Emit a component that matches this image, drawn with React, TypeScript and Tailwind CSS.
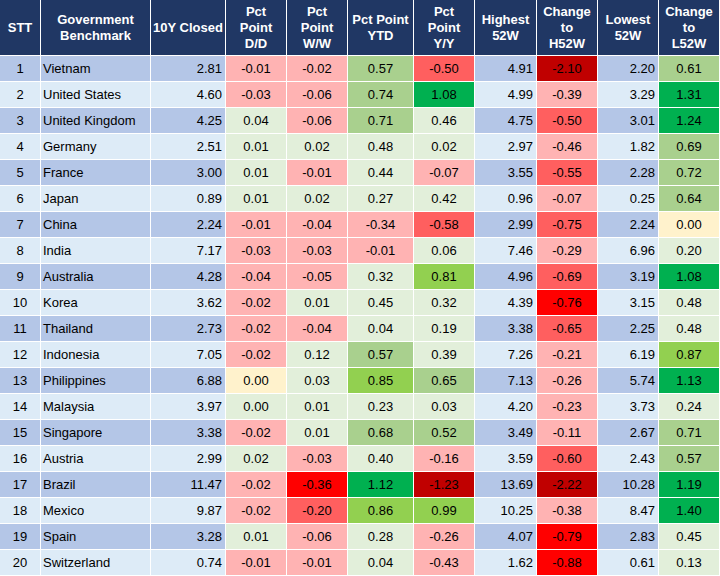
const LR = "bg-[#ffb3b3]";
const LG = "bg-[#e2efda]";
const MG = "bg-[#a9d08e]";
const BG = "bg-[#00b050]";
const LM = "bg-[#92d050]";
const MR = "bg-[#ff5f5f]";
const R = "bg-[#ff0000]";
const DR = "bg-[#c00000]";
const Y = "bg-[#fff2cc]";

type Cell = [string, string];

type Row = {
  name: string;
  closed: string;
  high: string;
  low: string;
  dd: Cell;
  ww: Cell;
  ytd: Cell;
  yy: Cell;
  h52: Cell;
  l52: Cell;
};

const rows: Row[] = [
  { name: "Vietnam", closed: "2.81", dd: ["-0.01", LR], ww: ["-0.02", LR], ytd: ["0.57", MG], yy: ["-0.50", MR], high: "4.91", h52: ["-2.10", DR], low: "2.20", l52: ["0.61", MG] },
  { name: "United States", closed: "4.60", dd: ["-0.03", LR], ww: ["-0.06", LR], ytd: ["0.74", MG], yy: ["1.08", BG], high: "4.99", h52: ["-0.39", LR], low: "3.29", l52: ["1.31", BG] },
  { name: "United Kingdom", closed: "4.25", dd: ["0.04", LG], ww: ["-0.06", LR], ytd: ["0.71", MG], yy: ["0.46", LG], high: "4.75", h52: ["-0.50", MR], low: "3.01", l52: ["1.24", BG] },
  { name: "Germany", closed: "2.51", dd: ["0.01", LG], ww: ["0.02", LG], ytd: ["0.48", LG], yy: ["0.02", LG], high: "2.97", h52: ["-0.46", LR], low: "1.82", l52: ["0.69", MG] },
  { name: "France", closed: "3.00", dd: ["0.01", LG], ww: ["-0.01", LR], ytd: ["0.44", LG], yy: ["-0.07", LR], high: "3.55", h52: ["-0.55", MR], low: "2.28", l52: ["0.72", MG] },
  { name: "Japan", closed: "0.89", dd: ["0.01", LG], ww: ["0.02", LG], ytd: ["0.27", LG], yy: ["0.42", LG], high: "0.96", h52: ["-0.07", LR], low: "0.25", l52: ["0.64", MG] },
  { name: "China", closed: "2.24", dd: ["-0.01", LR], ww: ["-0.04", LR], ytd: ["-0.34", LR], yy: ["-0.58", MR], high: "2.99", h52: ["-0.75", MR], low: "2.24", l52: ["0.00", Y] },
  { name: "India", closed: "7.17", dd: ["-0.03", LR], ww: ["-0.03", LR], ytd: ["-0.01", LR], yy: ["0.06", LG], high: "7.46", h52: ["-0.29", LR], low: "6.96", l52: ["0.20", LG] },
  { name: "Australia", closed: "4.28", dd: ["-0.04", LR], ww: ["-0.05", LR], ytd: ["0.32", LG], yy: ["0.81", LM], high: "4.96", h52: ["-0.69", MR], low: "3.19", l52: ["1.08", BG] },
  { name: "Korea", closed: "3.62", dd: ["-0.02", LR], ww: ["0.01", LG], ytd: ["0.45", LG], yy: ["0.32", LG], high: "4.39", h52: ["-0.76", R], low: "3.15", l52: ["0.48", LG] },
  { name: "Thailand", closed: "2.73", dd: ["-0.02", LR], ww: ["-0.04", LR], ytd: ["0.04", LG], yy: ["0.19", LG], high: "3.38", h52: ["-0.65", MR], low: "2.25", l52: ["0.48", LG] },
  { name: "Indonesia", closed: "7.05", dd: ["-0.02", LR], ww: ["0.12", LG], ytd: ["0.57", MG], yy: ["0.39", LG], high: "7.26", h52: ["-0.21", LR], low: "6.19", l52: ["0.87", LM] },
  { name: "Philippines", closed: "6.88", dd: ["0.00", Y], ww: ["0.03", LG], ytd: ["0.85", LM], yy: ["0.65", MG], high: "7.13", h52: ["-0.26", LR], low: "5.74", l52: ["1.13", BG] },
  { name: "Malaysia", closed: "3.97", dd: ["0.00", LG], ww: ["0.01", LG], ytd: ["0.23", LG], yy: ["0.03", LG], high: "4.20", h52: ["-0.23", LR], low: "3.73", l52: ["0.24", LG] },
  { name: "Singapore", closed: "3.38", dd: ["-0.02", LR], ww: ["0.01", LG], ytd: ["0.68", MG], yy: ["0.52", MG], high: "3.49", h52: ["-0.11", LR], low: "2.67", l52: ["0.71", MG] },
  { name: "Austria", closed: "2.99", dd: ["0.02", LG], ww: ["-0.03", LR], ytd: ["0.40", LG], yy: ["-0.16", LR], high: "3.59", h52: ["-0.60", MR], low: "2.43", l52: ["0.57", MG] },
  { name: "Brazil", closed: "11.47", dd: ["-0.02", LR], ww: ["-0.36", R], ytd: ["1.12", BG], yy: ["-1.23", DR], high: "13.69", h52: ["-2.22", DR], low: "10.28", l52: ["1.19", BG] },
  { name: "Mexico", closed: "9.87", dd: ["-0.02", LR], ww: ["-0.20", MR], ytd: ["0.86", LM], yy: ["0.99", LM], high: "10.25", h52: ["-0.38", LR], low: "8.47", l52: ["1.40", BG] },
  { name: "Spain", closed: "3.28", dd: ["0.01", LG], ww: ["-0.06", LR], ytd: ["0.28", LG], yy: ["-0.26", LR], high: "4.07", h52: ["-0.79", R], low: "2.83", l52: ["0.45", LG] },
  { name: "Switzerland", closed: "0.74", dd: ["-0.01", LR], ww: ["-0.01", LR], ytd: ["0.04", LG], yy: ["-0.43", LR], high: "1.62", h52: ["-0.88", R], low: "0.61", l52: ["0.13", LG] },
];

const headers = [
  ["STT"],
  ["Government", "Benchmark"],
  ["10Y Closed"],
  ["Pct", "Point", "D/D"],
  ["Pct", "Point", "W/W"],
  ["Pct Point", "YTD"],
  ["Pct", "Point", "Y/Y"],
  ["Highest", "52W"],
  ["Change", "to", "H52W"],
  ["Lowest", "52W"],
  ["Change", "to", "L52W"],
];

function Shade({ cell }: { cell: Cell }) {
  return (
    <div className={`flex items-center justify-center ${cell[1]}`}>{cell[0]}</div>
  );
}

export default function App() {
  return (
    <div className="w-[720px] h-[576px] bg-white overflow-hidden text-[13px] text-black font-['Liberation_Sans',Arial,sans-serif]">
      <div className="grid grid-cols-[40px_109px_74px_60px_60px_65px_60px_61px_60px_60px_60px] grid-rows-[55px] auto-rows-[25px] gap-px">
        {headers.map((lines, i) => (
          <div
            key={i}
            className="flex flex-col items-center justify-center bg-[#203764] text-white font-bold leading-[16px] text-center"
          >
            {lines.map((l) => (
              <span key={l}>{l}</span>
            ))}
          </div>
        ))}
        {rows.map((r, i) => {
          const base = i % 2 === 0 ? "bg-[#b4c6e7]" : "bg-[#ddebf7]";
          return [
            <div key={`n${i}`} className={`flex items-center justify-center ${base}`}>{i + 1}</div>,
            <div key={`c${i}`} className={`flex items-center pl-[2px] ${base}`}>{r.name}</div>,
            <div key={`z${i}`} className={`flex items-center justify-end pr-[3px] ${base}`}>{r.closed}</div>,
            <Shade key={`d${i}`} cell={r.dd} />,
            <Shade key={`w${i}`} cell={r.ww} />,
            <Shade key={`y${i}`} cell={r.ytd} />,
            <Shade key={`yy${i}`} cell={r.yy} />,
            <div key={`h${i}`} className={`flex items-center justify-end pr-[3px] ${base}`}>{r.high}</div>,
            <Shade key={`hc${i}`} cell={r.h52} />,
            <div key={`l${i}`} className={`flex items-center justify-end pr-[3px] ${base}`}>{r.low}</div>,
            <Shade key={`lc${i}`} cell={r.l52} />,
          ];
        })}
      </div>
    </div>
  );
}
